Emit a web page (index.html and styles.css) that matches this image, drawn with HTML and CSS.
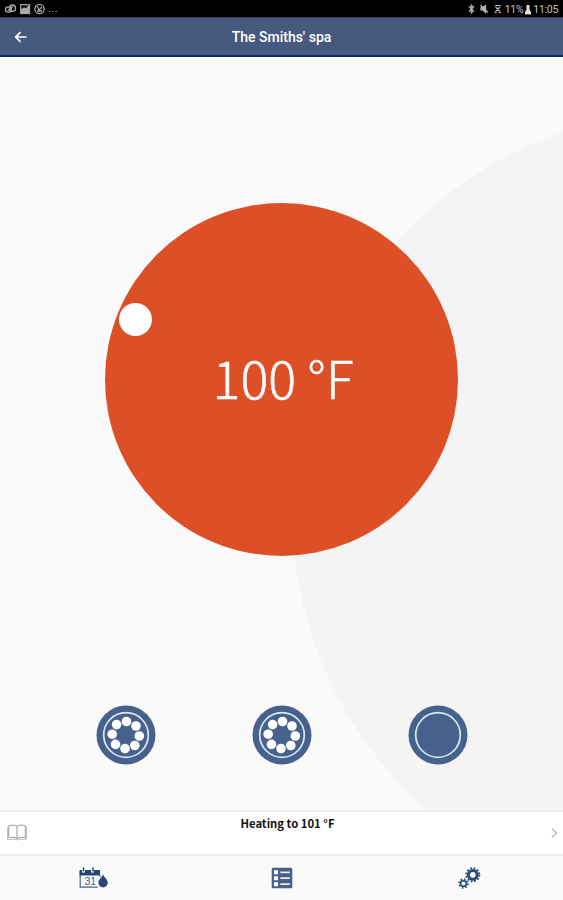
FILE: index.html
```html
<!DOCTYPE html>
<html lang="en">
<head>
<meta charset="utf-8">
<title>The Smiths' spa</title>
<link rel="stylesheet" href="styles.css">
</head>
<body>
<svg class="defs" width="0" height="0" aria-hidden="true">
  <symbol id="jets" viewBox="0 0 60 60">
    <circle cx="30" cy="30" r="29.5" fill="#46618c"/>
    <circle cx="30" cy="30" r="22.3" fill="none" stroke="#dce9f5" stroke-width="1.7"/>
    <g fill="#fff">
      <circle cx="30.5" cy="16.5" r="4.8"/><circle cx="40" cy="21" r="4.8"/>
      <circle cx="43.3" cy="31" r="4.8"/><circle cx="38.8" cy="40.5" r="4.8"/>
      <circle cx="29" cy="43.6" r="4.8"/><circle cx="19.5" cy="39.4" r="4.8"/>
      <circle cx="16.2" cy="29.2" r="4.8"/><circle cx="20.6" cy="19.6" r="4.8"/>
    </g>
  </symbol>
  <symbol id="light" viewBox="0 0 60 60">
    <circle cx="30" cy="30" r="29.5" fill="#46618c"/>
    <circle cx="30" cy="30" r="22.3" fill="none" stroke="#dce9f5" stroke-width="1.7"/>
  </symbol>
</svg>
<div class="app">
  <div class="status">
    <div class="notifications">
      <svg width="48" height="16" viewBox="0 0 48 16" fill="none" stroke="#aaa" stroke-width="1.3">
        <ellipse cx="8.5" cy="9.5" rx="3" ry="2.600"/><ellipse cx="12.5" cy="8.2" rx="3" ry="3.2"/><path d="M8 10.500l5-4"/>
        <rect x="20.700" y="4.700" width="8.800" height="8.800"/><path d="M21 13v-3l3-2 2 1 3-3v7z" fill="#aaa"/>
        <circle cx="39.500" cy="9" r="4.600"/><path d="M37 6l2 4 3-3M37 11h5"/>
      </svg><span class="more">...</span>
    </div>
    <div class="system">
      <svg width="38" height="16" viewBox="0 0 38 16" fill="none" stroke="#b5b5b5" stroke-width="1.200">
        <path d="M2 6.500l4.500 4.500-2.200 2v-8l2.200 2-4.500 4.500"/>
        <path d="M14 7.500h2l2.500-2v7L16 10h-2z" fill="#b5b5b5"/><path d="M13.500 5l7.500 7.500"/>
        <path d="M28 5.500h6M28.500 7l4.500 4.500M33 7l-4.500 4.500M27.500 12.500h2M32 12.500h2"/>
      </svg>
      <span>11%</span>
      <svg class="battery" width="6" height="10" viewBox="0 0 6 10"><path d="M1.500 0h3v4.500L6 7v2.500H0V7l1.500-2.500z" fill="#ddd"/></svg>
      <span>11:05</span>
    </div>
  </div>
  <header class="bar">
    <svg class="back" width="14" height="12" viewBox="0 0 14 12"><path d="M6.500 1.200L1.700 6l4.800 4.800M2 6h10.500" fill="none" stroke="#fff" stroke-width="1.700"/></svg>
    <h1>The Smiths' spa</h1>
  </header>
  <main class="stage">
    <div class="backdrop"></div>
    <div class="dial"><span class="knob"></span><span class="temp">100 °F</span></div>
    <div class="controls">
      <svg width="60" height="60"><use href="#jets"/></svg>
      <svg width="60" height="60"><use href="#jets"/></svg>
      <svg width="60" height="60"><use href="#light"/></svg>
    </div>
  </main>
  <section class="message">
    <svg class="book" width="20" height="17" viewBox="0 0 20 17" fill="none" stroke="#999" stroke-width="1"><path d="M10 2.500C8 .8 4 .8 1.700 1.800v12C4 13 8 13 10 14.500 12 13 16 13 18.300 13.800v-12C16 .8 12 .8 10 2.500v12"/><path d="M.6 3v12.300h7.700l1.700.7 1.700-.7h7.700V3" stroke="#bbb"/></svg>
    <p>Heating to 101 °F</p>
    <svg class="next" width="7" height="10" viewBox="0 0 7 10"><path d="M1 .8L5.500 5 1 9.200" fill="none" stroke="#b4b4b4" stroke-width="1.200"/></svg>
  </section>
  <nav class="tabs">
    <svg width="30" height="22" viewBox="0 0 30 22">
      <path d="M1.200 4.500v15.700h17.500" fill="none" stroke="#46618c" stroke-width="1.200"/>
      <path d="M.6 3H3v2.500h3V3h6v2.500h3V3h6v5.500H.6z" fill="#28457a"/>
      <path d="M4.500.6v4M14 .6v4" stroke="#28457a" stroke-width="1.500"/>
      <path d="M21 8v2" stroke="#46618c"/>
      <text x="5.500" y="18" class="day">31</text>
      <path d="M24 7c.6 3.500 4.800 5 4.800 8.800a4.700 4.700 0 0 1-9.400 0C19.400 12 23.400 10.500 24 7z" fill="#28457a"/>
    </svg>
    <svg class="list" width="22" height="22" viewBox="0 0 22 22">
      <rect x=".7" y=".7" width="20.600" height="20.600" rx="1.500" fill="#46618c"/>
      <path d="M3 3.200h4v4H3zM3 9.200h4v4H3zM3 15.200h4v4H3z" fill="#fff"/>
      <path d="M9.300 5.300h9.500M9.300 11.200h9.500M9.300 17.200h9.500" stroke="#e7edf5" stroke-width="1.700"/>
    </svg>
    <svg width="24" height="24" viewBox="0 0 24 24" fill="none" stroke="#2c4c7e">
      <circle cx="15.800" cy="8.800" r="4.400" stroke-width="3"/>
      <circle cx="15.800" cy="8.800" r="6.500" stroke-width="2" stroke-dasharray="1.800 1.603"/>
      <circle cx="6.500" cy="17.500" r="2.900" stroke-width="1.700"/>
      <circle cx="6.500" cy="17.500" r="4.400" stroke-width="1.700" stroke-dasharray="1.500 1.956"/>
    </svg>
  </nav>
</div>
</body>
</html>
```
FILE: styles.css
```css
* { box-sizing: border-box; }
body { margin: 0; background: #fafafa; font-family: Roboto, sans-serif; }
.defs { display: block; }
.app { width: 563px; height: 900px; display: flex; flex-direction: column; overflow: hidden; }
.status {
  height: 17px; background: #000; color: #c4c4c4;
  display: flex; justify-content: space-between; padding: 0 5px 0 0;
  font-size: 10.5px; line-height: 19px; letter-spacing: -0.3px;
}
.notifications, .system { display: flex; }
.more { letter-spacing: 0.6px; line-height: 18px; }
.battery { margin: 5px 2px 0; }
.bar {
  height: 40px; background: #465a80; border-top: 1px solid #33465c; border-bottom: 2px solid #182660;
  display: grid; grid-template-columns: 42px 1fr 42px; align-items: center;
}
.back { margin-left: 14px; }
.bar h1 { margin: 1px 0 0; text-align: center; color: #fff; font-size: 14px; font-weight: 500; line-height: 20px; }
.stage {
  position: relative; height: 753px; overflow: hidden;
  display: flex; flex-direction: column; align-items: center; padding-top: 145.500px;
}
.backdrop { position: absolute; left: 292px; top: 54px; width: 800px; height: 800px; border-radius: 50%; background: #f4f4f4; }
.dial {
  position: relative; width: 353px; height: 353px; border-radius: 50%; background: #dd4f27;
  display: flex; align-items: center; justify-content: center; flex: none;
}
.knob { position: absolute; left: 14px; top: 100px; width: 33px; height: 33px; border-radius: 50%; background: #fff; }
.temp {
  color: #fff; font-family: "Noto Sans CJK JP", "Open Sans", sans-serif; font-weight: 200;
  font-size: 52px; line-height: 60px; white-space: nowrap;
  padding: 0 0 5px 3px; -webkit-text-stroke: 0.5px #fff;
}
.controls { position: relative; display: flex; gap: 96px; margin-top: 149.500px; }
.controls svg { display: block; }
.message {
  height: 46px; background: #fff; border-top: 2px solid #eee; border-bottom: 2px solid #ececec;
  display: grid; grid-template-columns: 30px 1fr 18px;
}
.book { margin: 12px 0 0 7px; }
.message p {
  margin: 2px 0 0; text-align: center; color: #111;
  font-family: "Noto Sans CJK JP", "Open Sans", sans-serif; font-size: 11.300px; font-weight: 700; line-height: 18px;
}
.next { margin: 16px 0 0 6px; }
.tabs { height: 44px; background: #fafafa; display: grid; grid-template-columns: repeat(3, 1fr); justify-items: center; align-items: center; }
.list { margin-left: 1px; }
.day { font: 10.500px "Liberation Sans", sans-serif; fill: #46618c; }
```
